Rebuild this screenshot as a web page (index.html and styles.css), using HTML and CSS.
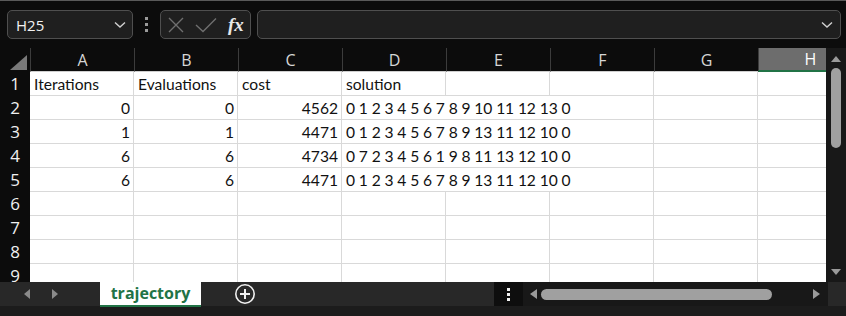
FILE: index.html
```html
<!DOCTYPE html>
<html>
<head>
    <title>trajectory</title>
    <link rel="stylesheet" href="styles.css">
</head>
<body>
    <div class="app">
        <!-- Barra de fórmulas -->
        <div class="formula-row">
            <div class="name-box">
                <span>H25</span>
                <svg width="12" height="8" viewBox="0 0 12 8"><path d="M1 1.5 L6 6 L11 1.5" fill="none" stroke="#d0d0d0" stroke-width="1.4"/></svg>
            </div>
            <div class="grip"><i></i><i></i><i></i></div>
            <div class="fx-box">
                <svg width="18" height="18" viewBox="0 0 18 18"><path d="M2 2 L16 16 M16 2 L2 16" stroke="#6f6f6f" stroke-width="1.4"/></svg>
                <svg width="22" height="16" viewBox="0 0 22 16"><path d="M1 8 L8 14.5 L21 1.5" fill="none" stroke="#6f6f6f" stroke-width="1.4"/></svg>
                <span class="fx">fx</span>
            </div>
            <div class="formula-input">
                <svg width="12" height="8" viewBox="0 0 12 8"><path d="M1 1.5 L6 6 L11 1.5" fill="none" stroke="#d0d0d0" stroke-width="1.4"/></svg>
            </div>
        </div>

        <!-- Hoja -->
        <div class="sheet">
            <div class="grid">
                <div class="corner"></div>
                <div class="col-head">A</div>
                <div class="col-head">B</div>
                <div class="col-head">C</div>
                <div class="col-head">D</div>
                <div class="col-head">E</div>
                <div class="col-head">F</div>
                <div class="col-head">G</div>
                <div class="col-head active">H</div>

                <div class="row-head">1</div>
                <div class="cell">Iterations</div>
                <div class="cell">Evaluations</div>
                <div class="cell">cost</div>
                <div class="cell">solution</div>
                <div class="cell"></div><div class="cell"></div><div class="cell"></div><div class="cell"></div>

                <div class="row-head">2</div>
                <div class="cell num">0</div>
                <div class="cell num">0</div>
                <div class="cell num">4562</div>
                <div class="cell wide">0 1 2 3 4 5 6 7 8 9 10 11 12 13 0</div>
                <div class="cell"></div><div class="cell"></div>

                <div class="row-head">3</div>
                <div class="cell num">1</div>
                <div class="cell num">1</div>
                <div class="cell num">4471</div>
                <div class="cell wide">0 1 2 3 4 5 6 7 8 9 13 11 12 10 0</div>
                <div class="cell"></div><div class="cell"></div>

                <div class="row-head">4</div>
                <div class="cell num">6</div>
                <div class="cell num">6</div>
                <div class="cell num">4734</div>
                <div class="cell wide">0 7 2 3 4 5 6 1 9 8 11 13 12 10 0</div>
                <div class="cell"></div><div class="cell"></div>

                <div class="row-head">5</div>
                <div class="cell num">6</div>
                <div class="cell num">6</div>
                <div class="cell num">4471</div>
                <div class="cell wide">0 1 2 3 4 5 6 7 8 9 13 11 12 10 0</div>
                <div class="cell"></div><div class="cell"></div>

                <div class="row-head">6</div>
                <div class="cell"></div><div class="cell"></div><div class="cell"></div><div class="cell"></div>
                <div class="cell"></div><div class="cell"></div><div class="cell"></div><div class="cell"></div>

                <div class="row-head">7</div>
                <div class="cell"></div><div class="cell"></div><div class="cell"></div><div class="cell"></div>
                <div class="cell"></div><div class="cell"></div><div class="cell"></div><div class="cell"></div>

                <div class="row-head">8</div>
                <div class="cell"></div><div class="cell"></div><div class="cell"></div><div class="cell"></div>
                <div class="cell"></div><div class="cell"></div><div class="cell"></div><div class="cell"></div>

                <div class="row-head">9</div>
                <div class="cell"></div><div class="cell"></div><div class="cell"></div><div class="cell"></div>
                <div class="cell"></div><div class="cell"></div><div class="cell"></div><div class="cell"></div>
            </div>

            <div class="vscroll">
                <svg width="12" height="8" viewBox="0 0 12 8"><path d="M6 1 L11 7 L1 7 Z" fill="#9a9a9a"/></svg>
                <div class="vthumb"></div>
                <div class="spacer"></div>
                <svg width="12" height="8" viewBox="0 0 12 8"><path d="M1 1 L11 1 L6 7 Z" fill="#9a9a9a"/></svg>
            </div>
        </div>

        <!-- Pestañas -->
        <div class="tabs-bar">
            <div class="tab-nav">
                <svg width="6" height="10" viewBox="0 0 6 10"><path d="M6 0 L0 5 L6 10 Z" fill="#8a8a8a"/></svg>
                <svg width="6" height="10" viewBox="0 0 6 10"><path d="M0 0 L6 5 L0 10 Z" fill="#8a8a8a"/></svg>
            </div>
            <div class="tab">trajectory</div>
            <div class="add-sheet">
                <svg width="22" height="22" viewBox="0 0 22 22"><circle cx="11" cy="11" r="9.2" fill="none" stroke="#f0f0f0" stroke-width="1.6"/><path d="M11 6 V16 M6 11 H16" stroke="#f0f0f0" stroke-width="2"/></svg>
            </div>
            <div class="spacer"></div>
            <div class="hgrip"><i></i><i></i><i></i></div>
            <div class="hscroll">
                <svg width="7" height="10" viewBox="0 0 7 10"><path d="M7 0 L0 5 L7 10 Z" fill="#9a9a9a"/></svg>
                <div class="hthumb"></div>
                <div class="spacer"></div>
                <svg width="7" height="10" viewBox="0 0 7 10"><path d="M0 0 L7 5 L0 10 Z" fill="#9a9a9a"/></svg>
            </div>
            <div class="tabs-end"></div>
        </div>
        <div class="status-strip"></div>
    </div>
</body>
</html>
```

FILE: styles.css
```css
body { margin: 0; background: #0c0c0c; font-family: "Open Sans", "Noto Sans", sans-serif; }
.app { width: 846px; height: 316px; overflow: hidden; border-top: 1px solid #5a5a5a; box-sizing: border-box; }
.spacer { flex: 1; }

/* barra de fórmulas */
.formula-row { display: flex; align-items: center; height: 47px; padding: 0 5px 0 7px; box-sizing: border-box; }
.name-box, .fx-box, .formula-input { height: 29px; box-sizing: border-box; border: 1px solid #4f4f4f; border-radius: 5px; background: #1f1f1f; display: flex; align-items: center; }
.name-box { width: 126px; padding: 0 6px 0 8px; justify-content: space-between; color: #f2f2f2; font-size: 15px; }
.grip { width: 27px; display: flex; flex-direction: column; align-items: center; gap: 3px; }
.grip i, .hgrip i { display: block; width: 3px; height: 3px; background: #9a9a9a; }
.fx-box { width: 91px; padding: 0 6px 0 6px; gap: 10px; }
.fx { font-family: "Liberation Serif", serif; font-style: italic; font-weight: bold; font-size: 19px; color: #e8e8e8; margin-left: 1px; }
.formula-input { flex: 1; margin-left: 6px; justify-content: flex-end; padding-right: 7px; }

/* hoja */
.sheet { display: flex; height: 234px; }
.grid { width: 826px; overflow: hidden; display: grid; grid-template-columns: 30px repeat(8, 104px); grid-auto-rows: 24px; background: #fff; }
.corner { background: #0c0c0c; position: relative; }
.corner::after { content: ""; position: absolute; left: 10px; top: 7px; width: 0; height: 0; border-left: 17px solid transparent; border-bottom: 15px solid #7a7a7a; }
.col-head { background: #0c0c0c; color: #d6d6d6; font-size: 16px; text-align: center; line-height: 24px; border-left: 1px solid #3c3c3c; border-bottom: 1px solid #cfcfcf; }
.col-head.active { background: #6d6d6d; color: #fff; border-bottom: 2px solid #217346; line-height: 23px; }
.row-head { background: #0c0c0c; color: #f0f0f0; font-size: 17px; text-align: center; line-height: 24px; }
.cell { font-family: "Lato", "Open Sans", sans-serif; font-size: 15.6px; color: #111; line-height: 25px; padding: 0 3px 0 4px; white-space: nowrap; overflow: hidden; border-right: 1px solid #d9d9d9; border-bottom: 1px solid #d9d9d9; box-sizing: border-box; }
.cell.num { text-align: right; }
.cell.wide { grid-column: span 3; letter-spacing: -0.1px; }

.vscroll { width: 20px; background: #181818; display: flex; flex-direction: column; align-items: center; padding: 7px 0 6px; box-sizing: border-box; }
.vthumb { width: 10px; height: 80px; margin-top: 5px; border-radius: 5px; background: #a0a0a0; }

/* pestañas */
.tabs-bar { display: flex; height: 24px; background: #282828; }
.tab-nav { width: 100px; display: flex; align-items: center; gap: 22px; padding-left: 24px; box-sizing: border-box; }
.tab { width: 101px; background: #fff; color: #217346; font-weight: 700; font-size: 16px; text-align: center; line-height: 22px; border-bottom: 2px solid #217346; box-sizing: border-box; height: 25px; }
.add-sheet { width: 90px; display: flex; align-items: center; padding-left: 33px; box-sizing: border-box; }
.hgrip { width: 29px; background: #0e0e0e; display: flex; flex-direction: column; align-items: center; justify-content: center; gap: 2px; }
.hgrip i { background: #f2f2f2; }
.hscroll { width: 305px; background: #181818; display: flex; align-items: center; padding: 0 8px 0 7px; box-sizing: border-box; }
.hthumb { width: 231px; height: 11px; margin-left: 4px; border-radius: 6px; background: #a0a0a0; }
.tabs-end { width: 18px; }
.status-strip { height: 10px; background: #1c1c1c; }
```
